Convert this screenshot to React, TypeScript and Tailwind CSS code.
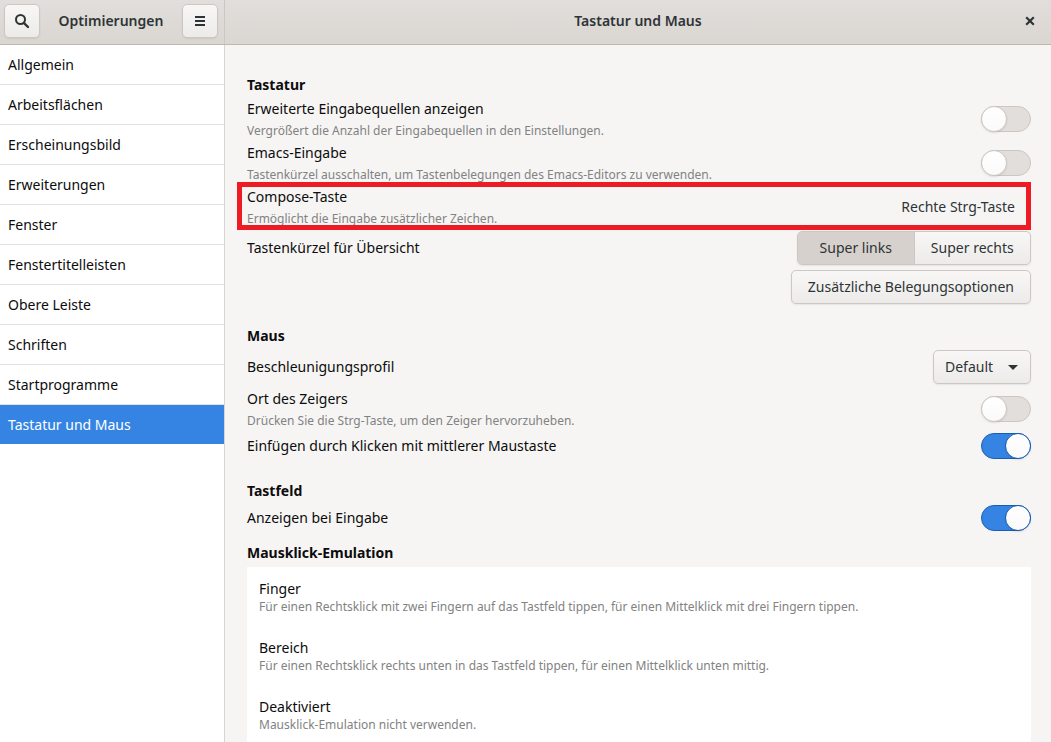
import { useState } from "react";
import type { ReactNode } from "react";

const pages = [
  "Allgemein",
  "Arbeitsflächen",
  "Erscheinungsbild",
  "Erweiterungen",
  "Fenster",
  "Fenstertitelleisten",
  "Obere Leiste",
  "Schriften",
  "Startprogramme",
  "Tastatur und Maus",
];

const emulationModes = [
  {
    title: "Finger",
    hint: "Für einen Rechtsklick mit zwei Fingern auf das Tastfeld tippen, für einen Mittelklick mit drei Fingern tippen.",
  },
  {
    title: "Bereich",
    hint: "Für einen Rechtsklick rechts unten in das Tastfeld tippen, für einen Mittelklick unten mittig.",
  },
  { title: "Deaktiviert", hint: "Mausklick-Emulation nicht verwenden." },
];

const raised =
  "border border-[#cdc7c2] bg-linear-to-b from-[#f8f7f6] to-[#edebe9] text-[#2e3436] shadow-[0_1px_2px_rgba(0,0,0,0.07)]";

function Switch({ id, initial = false }: { id: string; initial?: boolean }) {
  const [on, setOn] = useState(initial);
  return (
    <input
      id={id}
      type="checkbox"
      role="switch"
      checked={on}
      onChange={() => setOn(!on)}
      className="flex h-[26px] w-[50px] shrink-0 appearance-none items-center rounded-full border border-[#cdc7c2] bg-[#e1dedb] before:-ml-px before:size-[26px] before:shrink-0 before:rounded-full before:border before:border-[#cdc7c2] before:bg-linear-to-b before:from-white before:to-[#fafafa] before:shadow-[0_1px_2px_rgba(0,0,0,0.1)] before:content-[''] checked:border-[#1b5db4] checked:bg-[#3584e4] checked:before:ml-[23px] checked:before:border-[#1b5db4]"
    />
  );
}

function Row({
  id,
  title,
  hint,
  children,
}: {
  id?: string;
  title: string;
  hint?: string;
  children: ReactNode;
}) {
  return (
    <div className={`flex items-center justify-between gap-4 ${hint ? "h-11" : ""}`}>
      <label htmlFor={id} className={`flex flex-col ${hint ? "pt-0.5" : ""}`}>
        <span className="leading-[22px]">{title}</span>
        {hint && <span className="text-xs leading-[22px] text-[#828282]">{hint}</span>}
      </label>
      {children}
    </div>
  );
}

function Heading({ children }: { children: ReactNode }) {
  return <h2 className="leading-6 font-bold">{children}</h2>;
}

export default function App() {
  const [side, setSide] = useState("links");
  const [mode, setMode] = useState("");

  return (
    <div className="flex h-screen flex-col overflow-hidden bg-[#f6f5f4] font-['Noto_Sans',sans-serif] text-sm text-[#0c0c0c]">
      <header className="flex h-[45px] shrink-0 border-b border-[#bfb8b1] bg-linear-to-b from-[#e1dedb] to-[#dad6d2] text-[#2e3436]">
        <div className="flex w-[225px] shrink-0 items-center justify-between border-r border-[#cdc7c2] pr-1.5 pb-0.5 pl-1">
          <button type="button" aria-label="Suchen" className={`flex h-[34px] w-9 items-center justify-center rounded-[5px] ${raised}`}>
            <svg width="16" height="16" viewBox="0 0 16 16" fill="none" stroke="currentColor" strokeWidth="2">
              <circle cx="6.5" cy="6.5" r="4.5" />
              <path d="M9.8 9.8 14 14" strokeWidth="2.4" strokeLinecap="round" />
            </svg>
          </button>
          <h1 className="font-semibold">Optimierungen</h1>
          <button type="button" aria-label="Menü" className={`flex h-[34px] w-9 items-center justify-center rounded-[5px] ${raised}`}>
            <svg width="16" height="16" viewBox="0 0 16 16" fill="currentColor">
              <path d="M3 3h10v2H3zM3 7h10v2H3zM3 11h10v2H3z" />
            </svg>
          </button>
        </div>
        <div className="grid flex-1 grid-cols-[1fr_auto_1fr] items-center px-3 pb-0.5">
          <span />
          <p className="font-semibold">Tastatur und Maus</p>
          <button type="button" aria-label="Schließen" className="flex size-[18px] items-center justify-center justify-self-end">
            <svg width="16" height="16" viewBox="0 0 16 16" fill="none" stroke="currentColor" strokeWidth="2.2">
              <path d="m4.2 4.2 7.6 7.6M11.8 4.2l-7.6 7.6" />
            </svg>
          </button>
        </div>
      </header>

      <div className="flex min-h-0 flex-1">
        <nav className="w-[225px] shrink-0 border-r border-[#d8d4d0] bg-white">
          <ul>
            {pages.map((page, i) => (
              <li key={page} className="border-b border-[#e3e2e1] last:border-b-0">
                <a
                  href="#"
                  aria-current={i === 9 ? "page" : undefined}
                  className="flex h-[39px] items-center px-2 aria-[current=page]:bg-[#3584e4] aria-[current=page]:text-white"
                >
                  {page}
                </a>
              </li>
            ))}
          </ul>
        </nav>

        <main className="min-w-0 flex-1 overflow-y-auto pt-7 pr-5 pl-[22px] [scrollbar-width:none]">
          <section>
            <Heading>Tastatur</Heading>
            <Row id="sources" title="Erweiterte Eingabequellen anzeigen" hint="Vergrößert die Anzahl der Eingabequellen in den Einstellungen.">
              <Switch id="sources" />
            </Row>
            <Row id="emacs" title="Emacs-Eingabe" hint="Tastenkürzel ausschalten, um Tastenbelegungen des Emacs-Editors zu verwenden.">
              <Switch id="emacs" />
            </Row>
            <div className="relative">
              <Row id="compose" title="Compose-Taste" hint="Ermöglicht die Eingabe zusätzlicher Zeichen.">
                <button id="compose" type="button" className="px-4 text-[#2e3436]">
                  Rechte Strg-Taste
                </button>
              </Row>
              <div className="pointer-events-none absolute -top-[3px] right-0 -bottom-px -left-2.5 border-[5px] border-[#ed1c24]" />
            </div>
            <div className="mt-0.5">
              <Row title="Tastenkürzel für Übersicht">
                <div className={`flex h-[34px] w-[234px] overflow-hidden rounded-[5px] ${raised}`}>
                  {["links", "rechts"].map((s) => (
                    <button
                      key={s}
                      type="button"
                      aria-pressed={side === s}
                      onClick={() => setSide(s)}
                      className="flex-1 first:border-r first:border-[#cdc7c2] aria-pressed:bg-[#d6d1cd]"
                    >
                      Super {s}
                    </button>
                  ))}
                </div>
              </Row>
            </div>
            <div className="mt-[5px] flex justify-end">
              <button type="button" className={`h-[34px] rounded-[5px] px-4 ${raised}`}>
                Zusätzliche Belegungsoptionen
              </button>
            </div>
          </section>

          <section className="mt-5 flex flex-col gap-0.5">
            <Heading>Maus</Heading>
            <Row id="profile" title="Beschleunigungsprofil">
              <div className="relative">
                <select id="profile" className={`h-[34px] w-[98px] appearance-none rounded-[5px] pr-7 pl-[11px] ${raised}`}>
                  <option>Default</option>
                  <option>Adaptive</option>
                  <option>Flat</option>
                </select>
                <svg className="pointer-events-none absolute top-[15px] right-[13px] text-[#2e3436]" width="10" height="5" viewBox="0 0 10 5" fill="currentColor">
                  <path d="M0 0h10L5 5z" />
                </svg>
              </div>
            </Row>
            <div className="pt-px">
              <Row id="pointer" title="Ort des Zeigers" hint="Drücken Sie die Strg-Taste, um den Zeiger hervorzuheben.">
                <Switch id="pointer" />
              </Row>
            </div>
            <Row id="paste" title="Einfügen durch Klicken mit mittlerer Maustaste">
              <Switch id="paste" initial />
            </Row>
          </section>

          <section className="mt-5 flex flex-col gap-0.5">
            <Heading>Tastfeld</Heading>
            <Row id="typing" title="Anzeigen bei Eingabe">
              <Switch id="typing" initial />
            </Row>
          </section>

          <section className="mt-2.5 flex flex-col gap-0.5">
            <Heading>Mausklick-Emulation</Heading>
            <div role="radiogroup" aria-label="Mausklick-Emulation" className="bg-white">
              {emulationModes.map((m) => (
                <label key={m.title} className="relative flex flex-col px-3 pt-3 pb-[11px]">
                  <input
                    type="radio"
                    name="emulation"
                    checked={mode === m.title}
                    onChange={() => setMode(m.title)}
                    className="sr-only"
                  />
                  <span className="leading-5">{m.title}</span>
                  <span className="text-xs leading-4 text-[#828282]">{m.hint}</span>
                </label>
              ))}
            </div>
          </section>
        </main>
      </div>
    </div>
  );
}
